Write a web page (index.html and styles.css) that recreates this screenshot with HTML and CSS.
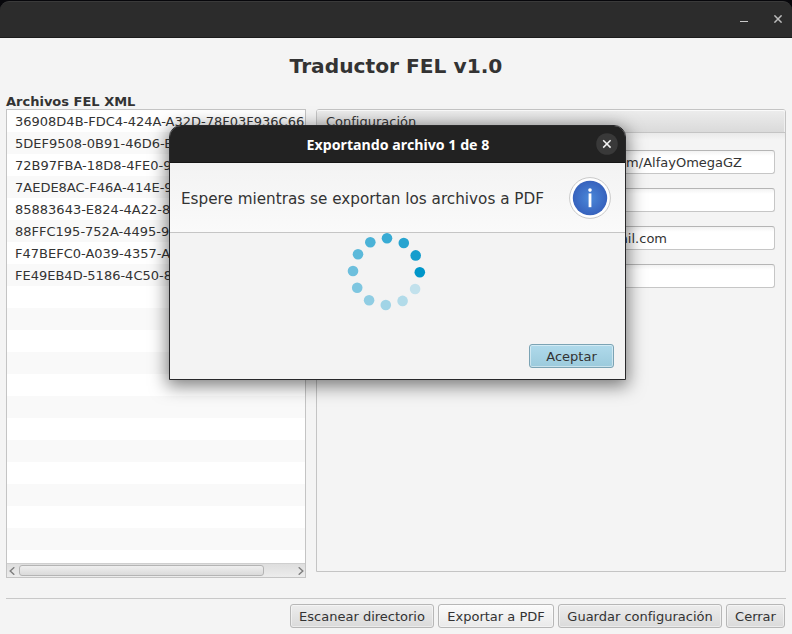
FILE: index.html
```html
<!DOCTYPE html>
<html lang="es">
<head>
<meta charset="utf-8">
<title>Traductor FEL v1.0</title>
<link rel="stylesheet" href="styles.css">
</head>
<body>
<div class="window">
  <header class="titlebar">
    <svg class="minimize" width="8" height="10" viewBox="0 0 8 10"><path d="M0 7.5h8" stroke="#c9c9c9"/></svg>
    <svg class="close" width="8" height="8" viewBox="0 0 8 8"><path d="M.4.4l7.2 7.2M7.6.4L.4 7.6" stroke="#bcbcbc" stroke-width="1.5"/></svg>
  </header>
  <h1>Traductor FEL v1.0</h1>
  <main>
    <section class="files">
      <h2>Archivos FEL XML</h2>
      <div class="list">
        <ul>
          <li>36908D4B-FDC4-424A-A32D-78F03F936C66</li>
          <li>5DEF9508-0B91-46D6-B</li>
          <li>72B97FBA-18D8-4FE0-9</li>
          <li>7AEDE8AC-F46A-414E-9</li>
          <li>85883643-E824-4A22-8</li>
          <li>88FFC195-752A-4495-9</li>
          <li>F47BEFC0-A039-4357-A</li>
          <li>FE49EB4D-5186-4C50-8</li>
        </ul>
        <div class="scrollbar">
          <svg width="6" height="8" viewBox="0 0 6 8"><path d="M5.3 .3L1.2 4 5.3 7.7" fill="none" stroke="#7d7d7d" stroke-width="1.4"/></svg>
          <div class="track"><div class="thumb"></div></div>
          <svg width="6" height="8" viewBox="0 0 6 8"><path d="M.7 .3L4.8 4 .7 7.7" fill="none" stroke="#7d7d7d" stroke-width="1.4"/></svg>
        </div>
      </div>
    </section>
    <section class="config">
      <h3>Configuración</h3>
      <div class="fields">
        <div class="field url">m/AlfayOmegaGZ</div>
        <div class="field"></div>
        <div class="field mail">ail.com</div>
        <div class="field"></div>
      </div>
    </section>
  </main>
  <footer>
    <button class="scan">Escanear directorio</button>
    <button class="export">Exportar a PDF</button>
    <button class="save">Guardar configuración</button>
    <button class="quit">Cerrar</button>
  </footer>
</div>
<div class="dialog">
  <div class="dialog-title">
    <span>Exportando archivo 1 de 8</span>
    <svg class="dialog-close" width="22" height="22" viewBox="0 0 22 22"><circle cx="11" cy="11" r="10.8" fill="#393939"/><path d="M7.2 7.2l7.4 7.4M14.6 7.2l-7.4 7.4" stroke="#f2f2f2" stroke-width="1.5"/></svg>
  </div>
  <div class="message">
    <span>Espere mientras se exportan los archivos a PDF</span>
    <svg width="42" height="42" viewBox="0 0 42 42">
      <defs><radialGradient id="blue"><stop offset="0" stop-color="#4a88d9"/><stop offset="1" stop-color="#3762bd"/></radialGradient></defs>
      <circle cx="21" cy="21" r="20.4" fill="#fff" stroke="#c9c9c9"/>
      <circle cx="21" cy="21" r="17.2" fill="url(#blue)"/>
      <circle cx="21" cy="13.1" r="1.8" fill="#fff"/>
      <path d="M21 16.4V30.2" stroke="#fff" stroke-width="2.8"/>
    </svg>
  </div>
  <div class="progress">
    <svg width="80" height="80" viewBox="347 232 80 80">
      <circle cx="387" cy="238.3" r="5.3" fill="#38abd4"/>
      <circle cx="403.8" cy="243" r="5.3" fill="#27a4d0"/>
      <circle cx="415.7" cy="255.4" r="5.3" fill="#159dcd"/>
      <circle cx="419.8" cy="272.2" r="5.3" fill="#0096c9"/>
      <circle cx="415.1" cy="289" r="5.3" fill="#c2e1ec"/>
      <circle cx="402.6" cy="300.9" r="5.3" fill="#b2dbe9"/>
      <circle cx="385.8" cy="305" r="5.3" fill="#a1d4e6"/>
      <circle cx="369.1" cy="300.2" r="5.3" fill="#90cde3"/>
      <circle cx="357.2" cy="287.8" r="5.3" fill="#7ec6e0"/>
      <circle cx="353" cy="271" r="5.3" fill="#6dbfdd"/>
      <circle cx="358" cy="254.3" r="5.3" fill="#5bb9da"/>
      <circle cx="370.3" cy="242.3" r="5.3" fill="#4ab2d7"/>
    </svg>
  </div>
  <div class="actions"><button class="accept">Aceptar</button></div>
</div>
</body>
</html>
```

FILE: styles.css
```css
* { box-sizing: border-box; }

body {
  margin: 0;
  width: 792px;
  height: 634px;
  overflow: hidden;
  background: #07070b;
  color: #333;
  font: 13px/22px "DejaVu Sans", sans-serif;
}

h1, h2, h3, ul { margin: 0; padding: 0; }

.window {
  display: flex;
  flex-direction: column;
  height: 633px;
  margin-top: 1px;
}

.titlebar {
  display: flex;
  align-items: center;
  justify-content: flex-end;
  gap: 26px;
  height: 37px;
  padding: 0 10px 2px 0;
  background: #2c2c2c;
  border-top: 1px solid #3a3a3a;
  border-bottom: 1px solid #1c1c1c;
  border-radius: 9px 9px 0 0;
}

h1 {
  height: 56px;
  background: #f4f4f4;
  font-size: 20.2px;
  line-height: 57px;
  text-align: center;
}

main {
  display: flex;
  gap: 10px;
  height: 504px;
  padding: 0 6px;
  background: #f4f4f4;
}

.files { width: 300px; }

h2 {
  height: 15px;
  font-size: 13px;
  line-height: 16px;
}

.list {
  display: flex;
  flex-direction: column;
  height: 469px;
  border: 1px solid #c4c4c4;
  background: #fff;
}

.list ul {
  flex: 1;
  overflow: hidden;
  list-style: none;
  background: repeating-linear-gradient(#fff 0 22px, #f9f9f9 22px 44px);
}

.list li {
  height: 22px;
  padding-left: 8px;
  line-height: 24px;
  white-space: nowrap;
}

.scrollbar {
  display: flex;
  align-items: center;
  justify-content: space-between;
  height: 14px;
  padding: 0 1px 0 2px;
  border-top: 1px solid #cfcfcf;
  background: linear-gradient(#dedede, #ececec);
}

.track { width: 281px; padding-left: 2px; }

.thumb {
  width: 245px;
  height: 11px;
  margin-left: 1px;
  border: 1px solid #b4b4b4;
  border-radius: 3px;
  background: linear-gradient(#efefef, #dadada);
}

.config {
  flex: 1;
  height: 463px;
  margin-top: 15px;
  border: 1px solid #c4c4c4;
  border-radius: 3px 3px 0 0;
}

h3 {
  height: 23px;
  padding-left: 9px;
  border-bottom: 1px solid #c4c4c4;
  border-radius: 2px 2px 0 0;
  background: linear-gradient(#ededed, #dadada);
  box-shadow: inset 0 1px #fafafa, inset -1px 0 #efefef;
  font-size: 13px;
  font-weight: normal;
  line-height: 24px;
}

.fields {
  display: grid;
  gap: 14px;
  padding: 17px 10px 0 104px;
  background: linear-gradient(#e9e9e9, #f4f4f4 7px);
}

.field {
  height: 24px;
  border: 1px solid #c6c6c6;
  border-top-color: #b5b5b5;
  border-radius: 3px;
  background: linear-gradient(#f3f3f3, #fff 5px);
  line-height: 24px;
  text-align: right;
}

.url { padding-right: 32px; }
.mail { padding-right: 107px; }

footer {
  display: flex;
  gap: 4px;
  flex: 1;
  justify-content: flex-end;
  padding: 6px 7px 0 6px;
  background: linear-gradient(#c8c8c8, #c8c8c8) 6px 0 / 780px 1px no-repeat #f4f4f4;
}

button {
  height: 24px;
  padding: 2px 0 0;
  border: 1px solid #b7b7b7;
  border-radius: 3px;
  background: linear-gradient(#ededed, #dadada);
  box-shadow: inset 0 0 0 1px rgba(255, 255, 255, .45);
  color: #333;
  font: 13px/20px "DejaVu Sans", sans-serif;
}

.scan { width: 144px; }
.export { width: 116px; background: linear-gradient(#fbfbfb, #e9e9e9); }
.save { width: 164px; }
.quit { width: 59px; }

.dialog {
  position: absolute;
  left: 169px;
  top: 125px;
  display: flex;
  flex-direction: column;
  width: 457px;
  height: 255px;
  border: 1px solid #28282a;
  border-radius: 12px 12px 0 0;
  background: #f3f3f3;
  box-shadow: 0 4px 17px 2px rgba(0, 0, 0, .5);
}

.dialog-title {
  display: grid;
  grid-template-columns: 30px 1fr 22px 7px;
  align-items: center;
  height: 37px;
  border-bottom: 1px solid #151515;
  border-radius: 11px 11px 0 0;
  background: #222;
  color: #fff;
  font: bold 14.2px/20px "Noto Sans", sans-serif;
}

.dialog-title span { grid-column: 2; padding-top: 1px; text-align: center; }

.message {
  display: flex;
  align-items: center;
  justify-content: space-between;
  height: 70px;
  padding: 0 14px 0 11px;
  border-bottom: 1px solid #c5c5c5;
  background: linear-gradient(#f3f3f3, #fafafa);
  font-size: 15.22px;
  white-space: nowrap;
}

.message span { padding-top: 2px; }

.progress {
  display: flex;
  height: 111px;
  padding-left: 177px;
}

.progress svg { margin-top: -1px; }

.actions {
  display: flex;
  justify-content: flex-end;
  padding-right: 11px;
}

.accept {
  width: 85px;
  height: 24px;
  border-color: #7ba3b4;
  background: linear-gradient(#b0daeb, #9bcadc);
}
```
